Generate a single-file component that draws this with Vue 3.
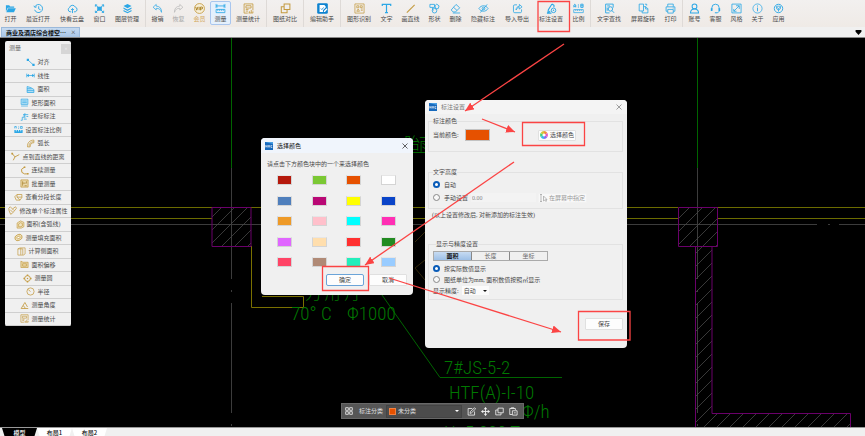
<script setup>
import { ref } from 'vue'

const B = '#2ba7e6'
const G = '#c39a3f'

const icons = {
  open: `<path d="M1 2.5h3.6l1 1.2H10v1.6H3L1 9.6z" fill="${B}"/><path d="M3.4 5.8H11.8L9.8 10H1.4z" fill="${B}"/>`,
  recent: `<path d="M2 4.2A4.4 4.4 0 1 1 1.8 7.4M1 3l1 1.8 2-.6M6.2 3.6v2.8l2 1" fill="none" stroke="${B}"/>`,
  cloud: `<path d="M3.4 9.6A2.4 2.4 0 0 1 2.8 5 3.3 3.3 0 0 1 9 4.4 2.7 2.7 0 0 1 9 9.6H7.6M6 11V6.2M4.4 7.6 6 6l1.6 1.6M4.6 9.6H3.4" fill="none" stroke="${B}"/>`,
  win: `<path d="M3.5 4h5v4.4h-5z" fill="${B}"/><path d="M1.5 4V2l2 .2M8.5 2.2l2-.2v2M10.5 8.4v2l-2-.2M3.5 10.2l-2 .2v-2M1.5 2l9 8.4M10.5 2l-9 8.4" fill="none" stroke="${B}"/>`,
  layers: `<path d="M6 1.2 10.4 3.4 6 5.6 1.6 3.4zM1.6 4.8 6 7l4.4-2.2v1.6L6 8.6 1.6 6.4zM1.6 7.6 6 9.8l4.4-2.2v1.4L6 11.2 1.6 9z" fill="${B}"/>`,
  undo: `<path d="M4.6 1.6 1.2 4.6l3.4 3V5.8c3 0 4.6.8 5.8 4.4C10.600 6 8.400 3.500 4.600 3.400z" fill="none" stroke="${B}" stroke-width=".8"/>`,
  redo: `<path d="M7.400 1.600 10.800 4.600l-3.400 3V5.800C4.400 5.800 2.800 6.600 1.600 10.200 1.400 6 3.600 3.500 7.400 3.400z" fill="none" stroke="#b9b9b9" stroke-width=".8"/>`,
  vip: `<circle cx="6" cy="6" r="5.400" fill="#f7efd8" stroke="${G}" stroke-width=".9"/><path d="M1.800 4.200 3 7.800 4.300 4.200M5.600 4.200v3.600M7.200 8V4.400h1.200a1 1 0 0 1 0 2.100H7.200" fill="none" stroke="#a67c1c" stroke-width="1"/>`,
  measure: `<path d="M1.200 1v4.500M10.800 1v4.500M1.200 3.200h9.600M3 2 1.500 3.200 3 4.500M9 2l1.500 1.200L9 4.500M1.200 7h9.600v3.500H1.200zM3 7v1.500M5 7v1.500M7 7v1.500M9 7v1.500" fill="none" stroke="${B}" stroke-width=".9"/>`,
  stat: `<path d="M1.200 1h9.600v7M1.200 1v10h4M3.200 3h5.600v2.500H3.200zM3 7h3M3 8.800h2.500M7 10.800V9M9 10.800V7.500M10.800 10.800V9M6 10.900h5" fill="none" stroke="${G}" stroke-width=".9"/>`,
  compare: `<path d="M4.500 1.200h6.300v6H4.500zM4.500 4H1.400v6.600h6.300V7.200" fill="none" stroke="${G}" stroke-width="1.100"/>`,
  helper: `<rect x=".2" y=".2" width="11.600" height="11.600" rx="1.500" fill="#0d83d0"/><path d="M2.800 2.300h5.200l1.500 1.400v1.200L6.500 8v1.700H2.800z" fill="#fff"/><path d="M10.400 5.600 7.500 8.600v1.200h1.200l2.700-3z" fill="#fff"/><path d="M4.200 6l1.100 1.200 2-2.400" fill="none" stroke="#0d83d0" stroke-width=".9"/>`,
  shapeid: `<path d="M1 1h10v10H1z" fill="none" stroke="${G}" stroke-width=".8"/><path d="M3 3h2.200v2.200H3zM6.800 3h2.200v2H6.800zM3 9l1.500-2.500L6 9zM7.500 6.500h2M7.500 8h2" fill="none" stroke="${G}" stroke-width=".8"/>`,
  text: `<path d="M1.400 3.400V1.600h9.200v1.800M6 1.600v9M4.400 10.500h3.200" fill="none" stroke="${B}" stroke-width="1.300"/>`,
  line: `<path d="M2 10.500 10.500 2" stroke="${G}" stroke-width="1.200"/>`,
  shapes: `<path d="M1 1.500h5v3.300H1zM6.500 3l2-1.800 2.500 2-1 3H7.200zM3.500 5l1 3.500" fill="none" stroke="${B}" stroke-width=".9"/><circle cx="6" cy="8.400" r="2.500" fill="none" stroke="${B}" stroke-width=".9"/>`,
  erase: `<path d="M6.600 1.600 10.600 5.200 6 9.800H3.400L1.300 7.600zM3.800 4.600 7.700 8.200M3 10.900h8" fill="none" stroke="${B}" stroke-width=".9"/>`,
  hide: `<path d="M1 6c2.500-4 7.500-4 10 0-2.500 4-7.500 4-10 0zM2.500 10.500 10 1.500" fill="none" stroke="${B}" stroke-width=".9"/><circle cx="6" cy="6" r="1.500" fill="none" stroke="${B}" stroke-width=".9"/>`,
  io: `<path d="M5.500 2H3A1.400 1.400 0 0 0 1.600 3.400V9.200A1.400 1.400 0 0 0 3 10.600h6a1.400 1.400 0 0 0 1.400-1.400V7M4.400 7.600C4.500 5 6 3.700 8 3.700V1.600L11 4.200 8 6.600V5C6.400 5 5.200 6 4.400 7.600z" fill="none" stroke="${B}" stroke-width=".9"/>`,
  markset: `<path d="M6.500 1 2.600 7.400 2 10.600 4.600 9M6.500 1l2.200 1.400v2.200M1 11h5" fill="none" stroke="${B}" stroke-width="1.200"/><circle cx="8.200" cy="8" r="2.500" fill="none" stroke="${B}"/><circle cx="8.200" cy="8" r=".8" fill="${B}"/>`,
  ratio: `<path d="M1 4.800V2.200l1-.9 1 .9v2.600M1 3.600h2M8.500 1.300H11v3.500H8.500zM8.500 3H11" fill="none" stroke="${B}" stroke-width="1"/><path d="M5.300 1.500h1.200v1.200H5.300zM5.300 3.700h1.200v1.200H5.300z" fill="${B}"/><path d="M.8 7.200h10.400v3.300H.8zM3 7.200v1.500M5 7.200v1.500M7 7.200v1.500M9 7.200v1.500" fill="none" stroke="${B}" stroke-width=".8"/>`,
  find: `<path d="M10 5V1.200H1.800v9.600H6M3.500 3.200h3M3.500 8.500V5" fill="none" stroke="${B}"/><circle cx="7" cy="6.500" r="2.400" fill="none" stroke="${B}"/><path d="m8.700 8.300 2.300 2.400" stroke="${B}"/>`,
  rotate: `<path d="M1.300 1.200H6v7.500H1.300zM6 4h2.500l2.300 2.300v4.500H4.500V8.700M8.300 4v2.500h2.500M7.500 1.300h2v1.500" fill="none" stroke="${B}" stroke-width=".9"/>`,
  print: `<path d="M3 4V1.200h6V4M3 9H1.200V4.200h9.600V9H9M3 7h6v4H3zM8.500 5.500h1" fill="none" stroke="${B}" stroke-width=".9"/>`,
  user: `<circle cx="6" cy="3.700" r="2.600" fill="none" stroke="${B}" stroke-width="1.100"/><path d="M1.600 11C1.600 7.800 3.500 6.600 6 6.600s4.400 1.200 4.400 4.400z" fill="none" stroke="${B}" stroke-width="1.100"/>`,
  service: `<path d="M2 7V5.300a4 4 0 0 1 8 0V7M10 8.500c0 1.500-1.400 2.200-3 2.200" fill="none" stroke="${B}" stroke-width="1"/><path d="M.9 5.800h1.800v3H.9zM9.300 5.800h1.800v3H9.300zM5.300 10h2v1.300h-2z" fill="${B}"/>`,
  style: `<path d="M1 1.200h10v9.600H1zM3 9l6-6M5.500 3H9v3.500M3 6.500V9h3" fill="none" stroke="${B}" stroke-width=".9"/>`,
  about: `<circle cx="6" cy="6" r="5" fill="none" stroke="${B}" stroke-width=".8"/><path d="M6 5v4M6 2.700v1.200" stroke="${B}" stroke-width="1"/>`,
  apps: `<circle cx="6" cy="6" r="4.600" fill="none" stroke="${B}" stroke-width="1"/><path d="M3 4l3 2 3-2M6 6v3.400M4 3.500h4v3L6 8 4 6.500z" fill="none" stroke="${B}" stroke-width=".8"/>`,
  align: `<path d="m2.500 2.500 7 6.500" stroke="${B}"/><path d="M1 1h3v3H1zM8.500 7.800h3v3h-3z" fill="${B}"/>`,
  linear: `<path d="M1.500 6h9M1 3.500v5M11 3.500v5" stroke="${B}"/><path d="M1 6l3-2v4zM11 6 8 4v4z" fill="${B}"/>`,
  area: `<path d="M1.500 10V2l5 1.500L10.500 6v4zM1.500 5h6M1.500 7.500h9" fill="#bfe4f6" stroke="${B}"/>`,
  rect: `<path d="M1.500 1.500h9v7h-9zM3 4h6M3 6.200h6M1.500 10.700h9" fill="#bfe4f6" stroke="${B}" stroke-width=".9"/>`,
  coord: `<path d="M1 11h2V7h2.500V3.500M4 3.500h7M6.500 1.500v7M8.500 6H11M5 9.500h4" fill="none" stroke="${B}"/>`,
  scale: `<path d="M1 4.500V2h2v2.500M8.500 2H11v2.500H8.500zM5.500 2.500h1M5.500 4.500h1" fill="none" stroke="${B}"/><path d="M.5 6.500h11v4H.5z" fill="${B}"/><path d="M3 6.500v2M6 6.500v2M9 6.500v2" stroke="#fff"/>`,
  arc: `<path d="M2 10.500C1.500 5 5 1.500 10.500 1.500V5C7.500 5 5.500 6.500 5.500 10.500zM4 10c0-4 2-6 6-6.500" fill="none" stroke="${G}"/>`,
  dist: `<path d="m1.500 2 3.800 4.500L11 3.500M5.300 6.500 3 11" fill="none" stroke="${G}" stroke-width="1.200"/><path d="M.5 1h2.300v2.300H.5z" fill="${G}"/>`,
  chain: `<path d="M6 1.500 2 4.500l.5 4 3.500 2h4" fill="none" stroke="${G}" stroke-width="1.300"/><path d="M5 .7h2.200v2H5zM9.300 9.200h2.200v2.200H9.300z" fill="${G}"/>`,
  batch: `<path d="M1.200 1.200h9.600v9.600H1.200z" fill="#ead9ac" stroke="${G}"/><path d="M3.500 3v6M3.500 5.500h4M8.500 3v3M6 9h3" fill="none" stroke="#a8822c"/>`,
  seg: `<path d="M1 5l3-3h6.500v4L8 9.500H3zM4 2v3.500L8 9.500M4 5.500h6.500" fill="none" stroke="${G}"/>`,
  modify: `<path d="m1 3 2-2 3 3 4-3 1.300 2L6 9.500 3.500 11 1.500 6.500zM3 5l3 3M6 4l2 2" fill="none" stroke="${G}"/>`,
  poly: `<path d="M1.500 4 6 1.200l4.500 2V9L7 10.800H1.500zM3.500 5.200 6 3.600l2.500 1V8L6.500 9h-3z" fill="#f0e4c2" stroke="${G}" stroke-width=".9"/>`,
  fill: `<ellipse cx="6" cy="6" rx="5" ry="3.800" transform="rotate(-25 6 6)" fill="#f0e4c2" stroke="${G}"/><ellipse cx="6" cy="6" rx="2.500" ry="1.500" transform="rotate(-25 6 6)" fill="#fff" stroke="${G}" stroke-width=".9"/>`,
  side: `<path d="M1.200 2.500 4 1.200h6.800v8L8.500 10.800H1.200zM5 1.500v9M1.200 2.500h6.500v8" fill="none" stroke="${G}" stroke-width=".9"/>`,
  offset: `<path d="M1.200 1.500 4 3h6.800v7H1.200zM3.500 5h5v3.200h-5z" fill="#ead9ac" stroke="${G}" stroke-width=".9"/>`,
  circle: `<circle cx="6" cy="6" r="3.800" fill="none" stroke="${G}" stroke-width="1.200"/><circle cx="6" cy="6" r="1" fill="${G}"/><path d="M5 .6h2v2H5zM5 9.400h2v2H5zM.6 5h2v2h-2zM9.400 5h2v2h-2z" fill="${G}"/>`,
  radius: `<circle cx="6" cy="6" r="4.800" fill="none" stroke="${G}"/><path d="M6 6 3 3.500" stroke="${G}"/>`,
  angle: `<path d="M6.500 2 1.500 10h9.500M6.500 2 10 8M4 6.500c2 .5 2.500 1.500 2.500 3.500" fill="none" stroke="${G}" stroke-width="1.100"/>`,
  grid: `<path d="M1 1h4v4H1zM7 1h4v4H7zM1 7h4v4H1zM7 7h4v4H7z" fill="none" stroke="#e6e6e6" stroke-width="1.300"/>`,
  edit: `<path d="M7 2H1.500v8.800h8.600V6M4 8.500l.5-2.300L10 1l1.500 1.500L6 7.800z" fill="none" stroke="#f0f0f0" stroke-width="1.100"/>`,
  move: `<path d="M6 1v10M1 6h10" stroke="#f0f0f0" stroke-width="1.200"/><path d="M6 0 8.400 3H3.600zM6 12 3.600 9h4.800zM0 6l3-2.400v4.800zM12 6 9 8.400V3.600z" fill="#f0f0f0"/>`,
  copy: `<path d="M4 1.500h7v6.200H4zM4 4H1v6.500h7V7.700" fill="none" stroke="#f0f0f0" stroke-width="1.100"/>`,
  paste: `<path d="M4 10H1V2h7.500v2M3 2V1h3.500v1M4.500 5h6.300v5.800H4.500zM6.500 7.800H9" fill="none" stroke="#f0f0f0" stroke-width="1.100"/>`
}

const groups = [
  [['open', '打开'], ['recent', '最近打开'], ['cloud', '快看云盘'], ['win', '窗口'], ['layers', '图层管理']],
  [['undo', '撤销'], ['redo', '恢复', 'dim'], ['vip', '会员', 'gold'], ['measure', '测量', 'active'], ['stat', '测量统计']],
  [['compare', '图纸对比']],
  [['helper', '编辑助手']],
  [['shapeid', '图形识别'], ['text', '文字'], ['line', '画直线'], ['shapes', '形状'], ['erase', '删除'],
    ['hide', '隐藏标注'], ['io', '导入导出'], ['markset', '标注设置'], ['ratio', '比例']],
  [['find', '文字查找'], ['rotate', '屏幕旋转'], ['print', '打印']],
  [['user', '账号'], ['service', '客服'], ['style', '风格'], ['about', '关于'], ['apps', '应用']]
]

const tools = [
  ['align', '对齐'], ['linear', '线性'], ['area', '面积'], ['rect', '矩形面积'], ['coord', '坐标标注'],
  ['scale', '设置标注比例'], ['arc', '弧长'], ['dist', '点到直线的距离'], ['chain', '连续测量'], ['batch', '批量测量'],
  ['seg', '查看分段长度'], ['modify', '修改单个标注属性'], ['poly', '面积(含弧线)'], ['fill', '测量填充面积'],
  ['side', '计算侧面积'], ['offset', '面积偏移'], ['circle', '测量圆'], ['radius', '半径'], ['angle', '测量角度'], ['stat', '测量统计']
]

const colors = [
  '#b5190c', '#7bc834', '#e65100', '#ffffff',
  '#4f7fbc', '#b90875', '#ffff00', '#0a44c8',
  '#ee9a28', '#ffc0cb', '#00ffff', '#ff2fb4',
  '#e066ff', '#ffdead', '#ff3030', '#228b22',
  '#ff4466', '#b08a76', '#22eebb', '#99ccff'
]

const heightMode = ref('auto')
const showMode = ref('real')
const manual = ref('0.00')
const seg = ref('面积')
</script>

<template>
  <div class="app">
    <header class="toolbar">
      <div v-for="(g, i) in groups" :key="i" class="group">
        <button v-for="t in g" :key="t[1]" class="tool" :class="['n' + t[1].length, t[2]]">
          <svg viewBox="0 0 12 12" v-html="icons[t[0]]"></svg>
          <span>{{ t[1] }}</span>
        </button>
      </div>
    </header>

    <nav class="files">
      <div class="file"><b>商业及酒店综合楼空···</b><button class="close" aria-label="关闭">×</button></div>
      <button class="more" aria-label="更多"><svg viewBox="0 0 7 6"><path d="M0 0h7v2L3.500 6 0 2z" /></svg></button>
    </nav>

    <main class="canvas">
      <svg class="drawing" width="865" height="390" viewBox="0 37 865 390">
        <defs>
          <pattern id="hatch" width="13" height="13" patternUnits="userSpaceOnUse">
            <path d="M0 13 13 0M-1 1 1-1M12 14l2-2" stroke="#484848" stroke-width=".8" />
          </pattern>
        </defs>
        <g fill="none">
          <path d="M231.500 38V168M697.500 38V168" stroke="#006400" />
          <path d="M0 224.500H817M828 224.500h2M839 224.500H865M231.500 168V279M231.500 290v2M231.500 303V413M231.500 424v2M697.500 168V279M697.500 290v2M697.500 303V413M697.500 424v2" stroke="#3c3c3c" />
          <path d="M0 207.500H212M0 218.500H212M251 207.500H678M413 218.500H678M717 207.500H865M717 218.500H865" stroke="#6c6c00" />
          <path d="M251.500 246V307.500H303.500V296.500H262" stroke="#7a7000" />
          <path d="M212 207.500h39v39h-39zM678.500 207.500h39v39h-39z" fill="url(#hatch)" stroke="#6a006a" />
          <path d="M695.500 427V246.500H712V413.500H850.500V427" fill="url(#hatch)" stroke="#6a006a" />
          <path d="M425 232 415 242M425 260l-10 8 10 12" stroke="#33290a" />
          <path d="M382 295 440 377.500H562M404 152.500h22" stroke="#006400" />
        </g>
        <g class="cad">
          <text x="291" y="320">70° C</text>
          <text x="347" y="320">Φ1000</text>
          <text x="305" y="299" class="small">刀 用 月</text>
          <text x="404" y="149" class="small">胎</text>
          <text x="419" y="150" class="small">雨</text>
          <text x="444" y="374">7#JS-5-2</text>
          <text x="449" y="399">HTF(A)-I-10</text>
          <text x="445" y="419">L:5000</text>
          <text x="522" y="418">Φ/h</text>
          <text x="444" y="439">H=5.000 T</text>
        </g>
      </svg>

      <aside class="panel">
        <div class="panel-head"><span>测量</span><button aria-label="关闭面板">×</button></div>
        <div class="panel-list">
          <button v-for="t in tools" :key="t[1]">
            <svg viewBox="0 0 12 12" v-html="icons[t[0]]"></svg><span>{{ t[1] }}</span>
          </button>
        </div>
      </aside>

      <section class="dialog settings">
        <div class="title faded">
          <svg viewBox="0 0 8 8"><rect width="8" height="8" fill="#1769bd" /><path d="M0 0h8v2L4 1z" fill="#4ba0e4" /><path d="M.8 3v2.500M2.200 3v2.500M.8 4.300h1.400M3.300 5.500 4 3l.7 2.500M6 3v2.500h1.300M7.200 3 6 4.300" fill="none" stroke="#fff" stroke-width=".6" /></svg>
          <h2>标注设置</h2>
          <button aria-label="关闭"><svg viewBox="0 0 6 6"><path d="m.5.5 5 5M5.500.5l-5 5" /></svg></button>
        </div>
        <div class="settings-body">
          <fieldset class="color-set">
            <legend>标注颜色</legend>
            <div class="row current">
              <span>当前颜色:</span><i class="now"></i>
              <button class="btn pick">
                <svg viewBox="0 0 8 8" fill="none" stroke-width="2.400">
                  <path d="M4 1.300A2.700 2.700 0 0 1 6.340 2.650" stroke="#f28b3c" /><path d="M6.340 2.650A2.700 2.700 0 0 1 6.340 5.350" stroke="#e65dc0" />
                  <path d="M6.340 5.350A2.700 2.700 0 0 1 4 6.700" stroke="#8b6cf0" /><path d="M4 6.700A2.700 2.700 0 0 1 1.660 5.350" stroke="#38b6f0" />
                  <path d="M1.660 5.350A2.700 2.700 0 0 1 1.660 2.650" stroke="#47d07a" /><path d="M1.660 2.650A2.700 2.700 0 0 1 4 1.300" stroke="#d3c536" />
                </svg>选择颜色
              </button>
            </div>
          </fieldset>
          <fieldset class="height-set">
            <legend>文字高度</legend>
            <div class="row"><label><input v-model="heightMode" type="radio" name="h" value="auto">自动</label></div>
            <div class="row">
              <label><input v-model="heightMode" type="radio" name="h" value="manual">手动设置</label>
              <input v-model="manual" class="num" type="text" aria-label="文字高度数值">
              <button class="btn specify">
                <svg viewBox="0 0 8 8"><path d="M1 0v8M0 .5h2M0 7.500h2M3.500 2v5l1.300-1 1 1.500.8-.5-1-1.500H7z" fill="none" stroke="#aaa" stroke-width=".8" /></svg>在屏幕中指定
              </button>
            </div>
          </fieldset>
          <p class="note">(以上设置修改后, 对新添加的标注生效)</p>
          <fieldset class="show-set">
            <legend>显示与精度设置</legend>
            <div class="segs">
              <button v-for="s in ['面积', '长度', '坐标']" :key="s" :class="{ on: seg === s }" @click="seg = s">{{ s }}</button>
            </div>
            <div class="row"><label><input v-model="showMode" type="radio" name="s" value="real">按实际数值显示</label></div>
            <div class="row"><label><input v-model="showMode" type="radio" name="s" value="mm">图纸单位为mm, 面积数值按照㎡显示</label></div>
            <div class="row">
              <label for="precision">显示精度:</label>
              <span class="select-box"><select id="precision"><option>自动</option></select></span>
            </div>
          </fieldset>
          <div class="actions"><button class="btn wide">保存</button></div>
        </div>
      </section>

      <section class="dialog chooser">
        <div class="title">
          <svg viewBox="0 0 8 8"><rect width="8" height="8" fill="#1769bd" /><path d="M0 0h8v2L4 1z" fill="#4ba0e4" /><path d="M.8 3v2.500M2.200 3v2.500M.8 4.300h1.400M3.300 5.500 4 3l.7 2.500M6 3v2.500h1.300M7.200 3 6 4.300" fill="none" stroke="#fff" stroke-width=".6" /></svg>
          <h2>选择颜色</h2>
          <button aria-label="关闭"><svg viewBox="0 0 6 6"><path d="m.5.5 5 5M5.500.5l-5 5" /></svg></button>
        </div>
        <p>请点击下方颜色块中的一个来选择颜色</p>
        <div class="swatches">
          <button v-for="c in colors" :key="c" :aria-label="c" :style="{ background: c }"></button>
        </div>
        <div class="actions">
          <button class="btn wide primary">确定</button>
          <button class="btn wide">取消</button>
        </div>
      </section>

      <div class="float">
        <svg viewBox="0 0 12 12" v-html="icons.grid"></svg>
        <label for="category">标注分类</label>
        <span class="category"><i></i><select id="category"><option>未分类</option></select></span>
        <button v-for="n in ['edit', 'move', 'copy', 'paste']" :key="n" :aria-label="n">
          <svg viewBox="0 0 12 12" v-html="icons[n]"></svg>
        </button>
      </div>
    </main>

    <footer class="sheets">
      <button class="sheet on">模型</button>
      <button class="sheet">布局1</button>
      <button class="sheet">布局2</button>
    </footer>

    <svg class="marks" width="865" height="436" viewBox="0 0 865 436">
      <defs>
        <marker id="head" markerWidth="10" markerHeight="8" refX="9" refY="4" orient="auto" markerUnits="userSpaceOnUse">
          <path d="M0 0 9 4 0 8z" fill="#fb4444" />
        </marker>
      </defs>
      <g fill="none" stroke="#fb4444" stroke-width="1.300">
        <path d="M538 1.500h31.500v30H538zM522.500 122.500h62v23h-62zM322.500 266.500h46v24h-46zM578.500 311.500h51.500v28.500h-51.500z" />
        <path d="M564 44 465 111" marker-end="url(#head)" />
        <path d="M482 119 515 132" marker-end="url(#head)" />
        <path d="M514 162 365 265" marker-end="url(#head)" />
        <path d="M389 278 561 332" marker-end="url(#head)" />
      </g>
    </svg>
  </div>
</template>

<style>
body { margin: 0; background: #000; }
</style>

<style scoped>
.app {
  position: relative; display: flex; flex-direction: column; min-height: 100vh; overflow: hidden;
  font: 6px/8px "Liberation Serif", "Noto Sans CJK SC", serif; color: #4a4a4a; background: #f0f0f0;
}
.app *, .app *::before, .app *::after { box-sizing: border-box; }
button, input, select { font: inherit; color: inherit; margin: 0; padding: 0; border: 0; background: none; border-radius: 0; }
button { display: flex; align-items: center; justify-content: center; white-space: nowrap; }
svg { display: block; flex: none; }
h2, p { margin: 0; font: inherit; }

.toolbar { display: flex; height: 27px; background: linear-gradient(#f2f0ef, #efeae6); }
.group { display: flex; }
.group + .group { border-left: 1px solid #dedad7; margin-left: 1px; padding-left: 1px; }
.tool { flex-direction: column; justify-content: flex-start; gap: 1px; padding-top: 3px; width: 34px; }
.tool.n2 { width: 21px; }
.tool.n3 { width: 27px; }
.tool svg { width: 11px; height: 11px; }
.tool.dim { color: #a5a5a5; }
.tool.gold { color: #d3a95c; }
.tool.active { height: 24px; margin-top: 1px; padding-top: 2px; background: #e5f0fc; outline: 1px solid #a9c6ee; outline-offset: -1px; border-radius: 2px; }

.files { display: flex; justify-content: space-between; height: 11px; padding: 0 3px 0 1px; border-bottom: 1px solid #888; }
.file { display: flex; align-items: center; gap: 5px; padding: 0 3px 0 4px; color: #111; background: linear-gradient(#c6daf0, #a7c5e6); border: 1px solid #9bb9da; border-bottom: 0; }
.close { color: #555; font-size: 8px; }
.more svg { width: 7px; height: 5px; }

.canvas { position: relative; flex: 1; min-height: 389px; overflow: hidden; background: #000; }
.drawing { position: absolute; left: 0; top: -1px; }
.cad { font: 300 19px "Roboto Condensed", "Open Sans Condensed", Roboto, "Noto Sans CJK SC", sans-serif; fill: #007800; }
.cad .small { font-size: 16px; }

.panel { position: absolute; left: 5px; top: 3px; width: 66px; background: #f0f0f0; border-radius: 2px; overflow: hidden; }
.panel-head { display: flex; justify-content: space-between; height: 15px; padding: 3px 0 0 4px; color: #666; }
.panel-head button { width: 10px; height: 10px; background: #d6d6d6; color: #f4f4f4; }
.panel-list { display: grid; grid-template-rows: repeat(20, 1fr); height: 270px; }
.panel-list button { gap: 2px; border-bottom: 1px solid #cfcfcf; }
.panel-list svg { width: 9px; height: 9px; }

.dialog { position: absolute; background: #f0f0f0; border-radius: 4px; overflow: hidden; }
.title { display: flex; align-items: center; gap: 4px; height: 15px; padding: 0 5px 0 4px; background: #f0f5fc; color: #111; }
.title > svg { width: 8px; height: 8px; }
.title h2 { flex: 1; }
.title button svg { width: 6px; height: 6px; stroke: #222; stroke-width: .7; }
.title.faded { background: #f4f4f4; color: #777; height: 14px; }
.title.faded button svg { stroke: #777; }
.btn { height: 12px; background: #fdfdfd; border: 1px solid #e0e0e0; border-radius: 1px; }
.btn.wide { width: 38px; }
.btn.primary { border-color: #6ba4d8; border-radius: 2px; }
.actions { display: flex; justify-content: flex-end; gap: 5px; }

.chooser { left: 261px; top: 100px; width: 152px; padding-bottom: 9px; }
.chooser p { margin: 7px 6px; }
.swatches { display: grid; grid-template-columns: repeat(4, 15px); grid-auto-rows: 10px; justify-content: space-between; align-content: space-between; height: 92px; margin: 0 17px 7px 16px; }
.swatches button { border: 1px solid #d4d4d4; border-top-color: #e6e6e6; }
.chooser .actions { padding-right: 6px; }

.settings { left: 425px; top: 62px; width: 202px; padding-bottom: 18px; }
.settings-body { padding: 3px 4px 0 3px; }
fieldset { margin: 0; min-width: 0; border: 1px solid #e2e2e2; padding: 2px 4px 4px; }
legend { padding: 0; height: 8px; }
.row { display: flex; align-items: center; height: 13px; }
.row label { display: flex; align-items: center; gap: 4px; white-space: nowrap; }
.color-set { padding: 4px 4px 10px; margin-bottom: 16px; }
.current { height: 12px; }
.current span { width: 32px; }
.now { width: 25px; height: 12px; background: #e65100; border: 1px solid #c2c2c2; }
.pick { margin-left: 48px; padding: 0 1px; height: 11px; gap: 2px; }
.pick svg, .specify svg { width: 8px; height: 8px; }
.height-set { margin-bottom: 2px; }
input[type="radio"] { appearance: none; width: 7px; height: 7px; border: 1px solid #888; border-radius: 50%; background: #f8f8f8; }
input[type="radio"]:checked { border: 2px solid #0a5cb8; background: #fff; }
.num { width: 65px; height: 9px; margin: 0 2px 0 3px; padding-left: 1px; color: #888; background: #f3f3f3; }
.specify { height: 10px; padding: 0 1px; gap: 1px; color: #999; background: #f8f8f8; border-color: #f2f2f2; }
.note { margin: 0 4px 21px; }
.show-set { padding: 3px 4px; }
.show-set legend { margin-left: 3px; }
.show-set .row { height: 11px; }
.segs { display: flex; width: 115px; height: 10px; margin-bottom: 2px; border: 1px solid #aaa; }
.segs button { flex: 1; color: #666; }
.segs button + button { border-left: 1px solid #888; }
.segs .on { background: linear-gradient(#c7dbf2, #9dbfe6); color: #111; font-weight: 700; }
.select-box { position: relative; margin-left: 3px; }
.select-box::after, .category::after { content: ""; position: absolute; right: 2px; top: 4px; border: 2px solid transparent; border-top-color: #111; border-bottom: 0; }
select { appearance: none; display: block; }
.select-box select { width: 27px; height: 9px; padding-left: 2px; background: #fbfbfb; }
.settings .actions { margin-top: 18px; }

.float { position: absolute; left: 341px; top: 365px; display: flex; align-items: center; height: 16px; padding: 0 3px; background: #565656; color: #e0e0e0; border: 1px solid #686868; }
.float > svg { width: 8px; height: 8px; }
.float label { margin-left: 6px; }
.float button { width: 14px; height: 14px; }
.float button svg { width: 9px; height: 9px; }
.category { position: relative; display: flex; align-items: center; gap: 2px; width: 76px; height: 13px; margin: 0 2px 0 3px; padding-left: 2px; background: #4c4c4c; border: 1px solid #444; }
.category i { width: 7px; height: 7px; background: #e65100; border: 1px solid #f08040; }
.category select { flex: 1; height: 10px; }
.category::after { border-top-color: #fff; }

.sheets { display: flex; height: 9px; padding-left: 2px; background: #f0f0f0; border-top: 1px solid #999; color: #111; font-family: "Noto Sans CJK SC", sans-serif; font-weight: 500; }
.sheet { width: 35px; height: 9px; background: #fff; clip-path: polygon(0 0, 100% 0, 92% 100%, 8% 100%); }
.sheet.on { background: #000; color: #fff; }

.marks { position: absolute; left: 0; top: 0; pointer-events: none; }
</style>
